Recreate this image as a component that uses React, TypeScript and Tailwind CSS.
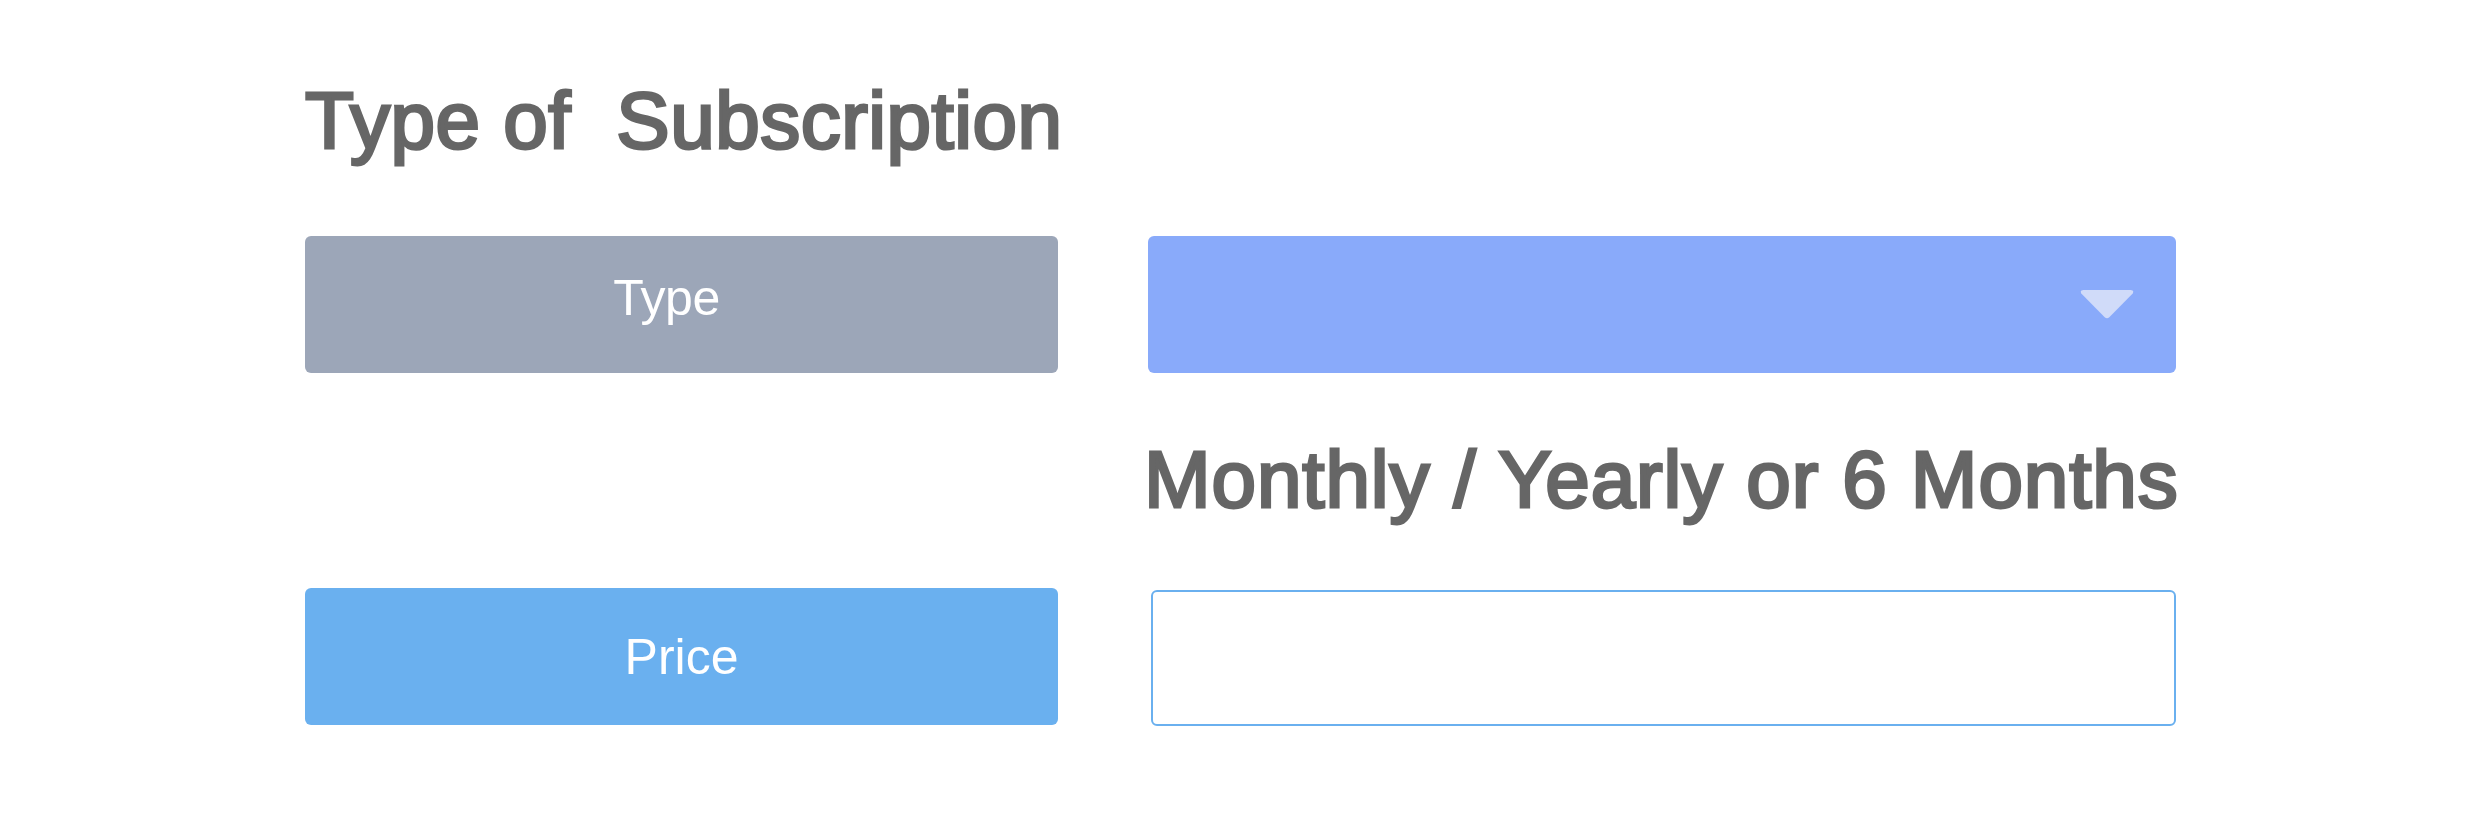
import { useState } from 'react';

function Caret() {
  return (
    <svg width="54" height="29" viewBox="0 0 54 29" className="shrink-0">
      <path
        d="M3.5 0 H50.5 Q54.5 0 52.7 3.4 L29.3 27.2 Q27 29.4 24.7 27.2 L1.3 3.4 Q-0.5 0 3.5 0 Z"
        fill="#d0dbf9"
      />
    </svg>
  );
}

export default function App() {
  const [price, setPrice] = useState('');

  return (
    <div
      className="w-full min-h-[826px] bg-white pl-[305px] pt-[81px]"
      style={{ fontFamily: '"Liberation Sans", Arial, sans-serif' }}
    >
      {/* heading */}
      <h1 className="text-[80px] leading-[80px] font-normal tracking-[0.5px] text-[#666666] whitespace-pre [-webkit-text-stroke:3px_#666666]">
        {'Type of  Subscription'}
      </h1>

      <div className="grid grid-cols-[753px_1028px] gap-x-[90px] mt-[75px]">
        {/* row 1 */}
        <div className="h-[137px] rounded-md bg-[#9ca6b8] flex items-center justify-center pr-[30px] pb-[13px]">
          <span className="text-[50px] leading-[50px] text-white tracking-[-0.5px]">Type</span>
        </div>
        <button className="h-[137px] rounded-md bg-[#89aafa] flex items-center justify-end pr-[42px]">
          <Caret />
        </button>

        {/* row 2 */}
        <div />
        <h2 className="mt-[67px] -ml-[4px] text-[80px] leading-[80px] font-normal tracking-[0.9px] text-[#666666] whitespace-nowrap [-webkit-text-stroke:3px_#666666]">
          Monthly / Yearly or 6 Months
        </h2>

        {/* row 3 */}
        <div className="mt-[68px] h-[137px] rounded-md bg-[#6ab0ef] flex items-center justify-center">
          <span className="text-[50px] leading-[50px] text-white">Price</span>
        </div>
        <input
          value={price}
          onChange={(e) => setPrice(e.target.value)}
          className="mt-[70px] ml-[3px] h-[136px] rounded-md border-2 border-[#6ab0ef] bg-white px-6 text-[50px] text-[#666666] outline-none"
        />
      </div>
    </div>
  );
}
